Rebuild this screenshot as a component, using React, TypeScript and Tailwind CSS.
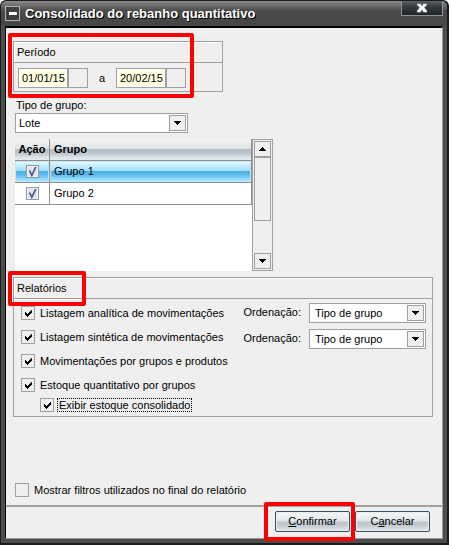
import React, { useState } from 'react';

const groups = [
  { id: 'g1', name: 'Grupo 1' },
  { id: 'g2', name: 'Grupo 2' },
];

const reports = [
  { id: 'analitica', label: 'Listagem analítica de movimentações' },
  { id: 'sintetica', label: 'Listagem sintética de movimentações' },
  { id: 'produtos', label: 'Movimentações por grupos e produtos' },
  { id: 'estoque', label: 'Estoque quantitativo por grupos' },
];

const Arrow: React.FC<{ up?: boolean }> = ({ up }) => (
  <svg width="7" height="4" viewBox="0 0 7 4" shapeRendering="crispEdges" aria-hidden="true">
    <path d={up ? 'M3 0h1v1h1v1h1v1h1v1H0V3h1V2h1V1h1z' : 'M0 0h7v1H6v1H5v1H4v1H3V3H2V2H1V1H0z'} fill="#000" />
  </svg>
);

interface CheckProps {
  id: string;
  label: string;
  defaultChecked?: boolean;
  focused?: boolean;
}

const Check: React.FC<CheckProps> = ({ id, label, defaultChecked = true, focused }) => (
  <div className="flex items-center gap-[3px]">
    <span className="relative h-3.5 w-3.5 shrink-0">
      <input
        id={id}
        type="checkbox"
        defaultChecked={defaultChecked}
        className="peer block h-3.5 w-3.5 appearance-none border border-[#a0a0a0] bg-[#efefef]"
      />
      <svg
        className="pointer-events-none absolute top-0 left-0 hidden peer-checked:block"
        width="14"
        height="14"
        viewBox="0 0 14 14"
        shapeRendering="crispEdges"
        aria-hidden="true"
      >
        <path d="M4 6h1v1h1v1h1V7h1V6h1V5h1V4h1v3h-1v1H9v1H8v1H7v1H6v-1H5V9H4z" fill="#000" />
      </svg>
    </span>
    <label
      htmlFor={id}
      className={`border border-dotted px-px leading-3 whitespace-nowrap ${focused ? 'border-black' : 'border-transparent'}`}
    >
      {label}
    </label>
  </div>
);

const Select: React.FC<{ id: string; option: string; className: string }> = ({ id, option, className }) => (
  <div className={`relative h-5 shrink-0 ${className}`}>
    <select id={id} className="block h-full w-full appearance-none border border-[#a0a0a0] bg-white pr-5 leading-4">
      <option>{option}</option>
    </select>
    <span className="pointer-events-none absolute top-0.5 right-0.5 bottom-0.5 flex w-[17px] items-center justify-center border border-[#a0a0a0] bg-[#efefef]">
      <Arrow />
    </span>
  </div>
);

const DateField: React.FC<{ label: string; value: string }> = ({ label, value }) => (
  <div className="flex h-5 border border-[#a0a0a0]">
    <input aria-label={label} defaultValue={value} className="w-12 border border-white bg-[#ffffe1] pl-0.5" />
    <button type="button" aria-label={`Escolher ${label}`} className="w-5 border-l-2 border-[#a0a0a0] bg-[#efefef]" />
  </div>
);

const Highlight: React.FC<{ className: string }> = ({ className }) => (
  <div className={`pointer-events-none absolute rounded-xs border-4 border-[#fe0000] ${className}`} />
);

const GroupTable = () => {
  const [selected, setSelected] = useState('g1');

  return (
    <div className="flex h-[132px] w-[258px] max-w-full bg-white">
      <div className="min-w-0 flex-1">
        <table className="w-full table-fixed border-separate border-spacing-0">
          <thead>
            <tr className="h-[22px]">
              <th className="w-[35px] border-r border-b border-[#909090] bg-[linear-gradient(#f4f5f5_0%,#dfe3e5_45%,#b4bec5_50%,#bcc5cb_68%,#dbe4e6_88%,#e6ecec_100%)] p-0 text-center text-[11px]">
                Ação
              </th>
              <th className="border-r border-b border-[#909090] bg-[linear-gradient(#f4f5f5_0%,#dfe3e5_45%,#b4bec5_50%,#bcc5cb_68%,#dbe4e6_88%,#e6ecec_100%)] p-0 pl-1 text-left text-[11px]">
                Grupo
              </th>
            </tr>
          </thead>
          <tbody>
            {groups.map((group) => {
              const fill =
                selected === group.id
                  ? 'bg-[linear-gradient(#f0fdff_0%,#c5efff_20%,#a3e0fb_45%,#4fb0e4_50%,#56b7ea_62%,#8cdaff_85%,#b9efff_100%)] shadow-[inset_0_0_0_1px_#c8e4f2]'
                  : 'bg-white';
              return (
                <tr key={group.id} className="h-[22px]" onClick={() => setSelected(group.id)}>
                  <td className={`border-r border-b border-[#909090] p-0 ${fill}`}>
                    <span className="relative mx-auto block h-[13px] w-[13px]">
                      <input
                        type="checkbox"
                        defaultChecked
                        aria-label={group.name}
                        className="peer block h-[13px] w-[13px] appearance-none border border-[#8f98a8] bg-[#dfe4ea] shadow-[inset_0_0_0_1px_#f4f4f4]"
                      />
                      <svg
                        className="pointer-events-none absolute top-0 left-0 hidden peer-checked:block"
                        width="13"
                        height="13"
                        viewBox="0 0 13 13"
                        aria-hidden="true"
                      >
                        <path d="M3.5 5.500l2.300 4.800L9.800 2" fill="none" stroke="#4c5594" strokeWidth="1.7" />
                      </svg>
                    </span>
                  </td>
                  <td className={`border-r border-b border-[#909090] p-0 pl-1 ${fill}`}>{group.name}</td>
                </tr>
              );
            })}
          </tbody>
        </table>
      </div>

      {/* Scroll bar */}
      <div className="flex w-[21px] flex-col border border-[#a0a0a0] bg-[#efefef] p-px">
        <button type="button" aria-label="Subir" className="flex h-4 items-center justify-center border border-[#a0a0a0]">
          <Arrow up />
        </button>
        <div className="flex-1">
          <div className="h-16 border border-[#a0a0a0]" />
        </div>
        <button type="button" aria-label="Descer" className="flex h-4 items-center justify-center border border-[#a0a0a0]">
          <Arrow />
        </button>
      </div>
    </div>
  );
};

const buttonClass =
  'h-[21px] w-[75px] rounded-xs border border-[#3c5061] bg-[linear-gradient(#f6f7f7_0%,#e2e6e8_48%,#bcc6cd_52%,#c3ccd2_72%,#e4eaec_100%)] shadow-[inset_0_0_0_1px_#e9eded]';

const App = () => {
  return (
    <div className="flex min-h-screen flex-col rounded-t-md border border-r-2 border-b-2 border-[#1b1b1b] bg-[#4d4d4d] px-1 pb-1 font-['Liberation_Sans',Arial,sans-serif] text-[11px] text-black">
      {/* Title bar */}
      <header className="-mx-1 flex h-[25px] items-center gap-[5px] rounded-t-md bg-linear-to-b from-[#8a8a8a] via-[#4a4a4a] via-40% to-[#454545] pr-1 pl-1">
        <button
          type="button"
          aria-label="Menu"
          className="flex h-[15px] w-[15px] items-center justify-center border border-[#b5b5b5] bg-[#3c3f40]"
        >
          <span className="h-[3px] w-2 bg-white" />
        </button>
        <h1 className="flex-1 text-[13px] font-bold whitespace-nowrap text-white [text-shadow:1px_1px_0_#000]">
          Consolidado do rebanho quantitativo
        </h1>
        <button
          type="button"
          aria-label="Fechar"
          className="flex h-[15px] w-[42px] items-center justify-center self-start border border-t-0 border-[#8d9292] bg-linear-to-b from-[#5d6263] via-[#33393b] via-45% to-[#202628]"
        >
          <svg width="12" height="10" viewBox="0 0 12 10" aria-hidden="true">
            <path
              d="M1 .5h3.500L6 2.700 7.500 .5H11V2L8.600 4.800 11 7.500V9.500H7.500L6 7 4.500 9.500H1V7.500L3.400 4.800 1 2z"
              fill="#fff"
              stroke="#59606a"
              strokeWidth=".8"
            />
          </svg>
        </button>
      </header>

      <main className="flex flex-1 flex-col border border-t-2 border-[#9a9a9a] border-t-black border-l-black bg-[#efefef]">
        <div className="flex flex-1 flex-col px-[7px] pt-[13px]">
          {/* Período */}
          <section className="relative w-[210px] border border-[#a0a0a0]">
            <h2 className="h-[21px] border-b border-[#a0a0a0] pl-[3px] leading-5 shadow-[inset_1px_1px_0_#fff]">Período</h2>
            <div className="flex items-center px-1 pt-[5px] pb-[3px]">
              <DateField label="data inicial" value="01/01/15" />
              <span className="w-7 text-center">a</span>
              <DateField label="data final" value="20/02/15" />
            </div>
            <Highlight className="-top-[9px] -left-[6px] h-[65px] w-[186px]" />
          </section>

          <div className="flex flex-col items-start pt-1.5 pl-0.5">
            <label htmlFor="tipo" className="h-[15px] pl-px leading-[14px]">
              Tipo de grupo:
            </label>
            <Select id="tipo" option="Lote" className="w-[173px] [&>select]:pl-[3px]" />
            <div className="pt-1.5">
              <GroupTable />
            </div>
          </div>

          {/* Relatórios */}
          <section className="relative mt-1.5 mr-0.5 border border-[#a0a0a0]">
            <h2 className="h-[21px] border-b border-[#a0a0a0] pl-[3px] leading-5 shadow-[inset_1px_1px_0_#fff]">Relatórios</h2>
            <div className="flex items-start justify-between pt-1 pr-1.5 pb-1 pl-[7px]">
              <div className="flex flex-col gap-2.5 pt-[3px]">
                {reports.map((report) => (
                  <Check key={report.id} id={report.id} label={report.label} />
                ))}
                <div className="-mt-1 pl-[19px]">
                  <Check id="consolidado" label="Exibir estoque consolidado" focused />
                </div>
              </div>
              <div className="flex flex-col gap-1.5">
                {['ordem1', 'ordem2'].map((id) => (
                  <div key={id} className="flex items-center gap-2">
                    <label htmlFor={id} className="pb-0.5">
                      Ordenação:
                    </label>
                    <Select id={id} option="Tipo de grupo" className="w-[117px] [&>select]:pl-[5px]" />
                  </div>
                ))}
              </div>
            </div>
            <Highlight className="-top-[7px] -left-[6px] h-[35px] w-[78px]" />
          </section>

          <div className="mt-auto pb-2 pl-0.5">
            <Check id="filtros" label="Mostrar filtros utilizados no final do relatório" defaultChecked={false} />
          </div>
        </div>

        <footer className="flex justify-end gap-[5px] border-t-2 border-[#a0a0a0] pt-1 pr-3 pb-1.5">
          <div className="relative">
            <button type="button" className={buttonClass}>
              <u>C</u>onfirmar
            </button>
            <Highlight className="-top-[9px] -left-[11px] h-[39px] w-[91px]" />
          </div>
          <button type="button" className={buttonClass}>
            C<u>a</u>ncelar
          </button>
        </footer>
      </main>
    </div>
  );
};

export default App;
